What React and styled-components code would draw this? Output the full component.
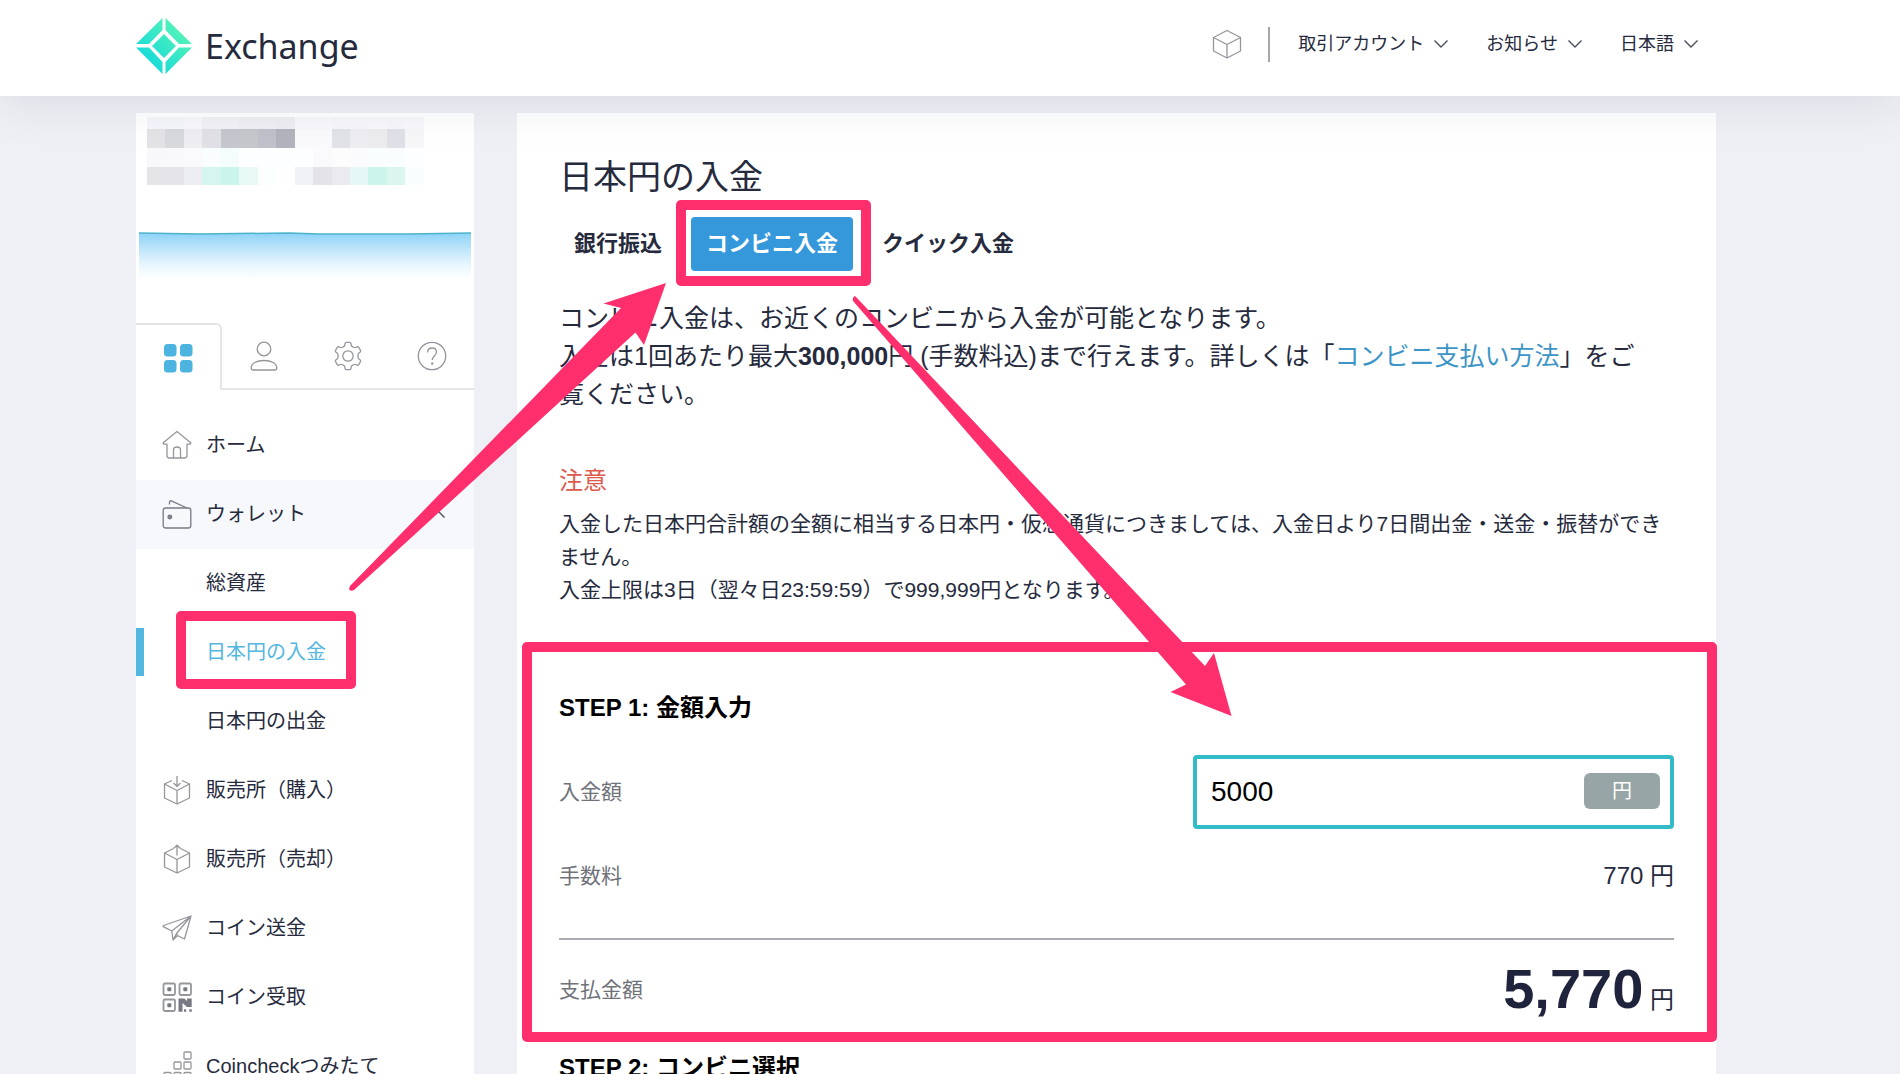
import React, { useState } from "react";
import styled, { createGlobalStyle, css } from "styled-components";

const FEE = 770;

const mosaic = [
  ["#f5f6fa", "#f5f6fa", "#f7f7fb", "#f1f1f5", "#f1f1f5", "#efeff2", "#efeff2", "#eeeef1", "#f8f8fc", "#f8f8fc", "#f6f6fa", "#f6f6fa", "#f7f7fb", "#f6f6fa", "#f8f8fc"],
  ["#e2e2e7", "#d8d9de", "#eeeef2", "#e0e0e6", "#c6c6ce", "#c6c6cd", "#c0c1cb", "#b3b3be", "#fafafc", "#fafafc", "#e2e3e8", "#eeeef2", "#ececef", "#e0e1e6", "#f7f7f9"],
  ["#f8f8fb", "#f9f9fc", "#fafafc", "#fafdfd", "#f5fdfc", "#fcfeff", "#fcfeff", "#fdfeff", "#fdfeff", "#fafafc", "#fcfcfd", "#fbfbfd", "#fafdfd", "#f9fdfd", "#fcfeff"],
  ["#e4e4e9", "#e4e4e9", "#eceef2", "#d5f5ee", "#cbf4ea", "#e9faf6", "#fbfffe", "#ffffff", "#f1f2f6", "#e3e3e9", "#ebebef", "#e6f8f5", "#cdf4ea", "#dbf5ef", "#fafdfe"],
];

// y and height of each mosaic row
const mosaicRows = [
  [0, 12],
  [12, 19],
  [31, 19],
  [50, 18],
];

const menu = [
  { label: "ホーム", icon: "home" },
  { label: "ウォレット", icon: "wallet", open: true },
  { label: "総資産" },
  { label: "日本円の入金", current: true },
  { label: "日本円の出金" },
  { label: "販売所（購入）", icon: "buy" },
  { label: "販売所（売却）", icon: "sell" },
  { label: "コイン送金", icon: "send" },
  { label: "コイン受取", icon: "qr" },
  { label: "Coincheckつみたて", icon: "stack" },
];

const tabs = [
  { icon: "grid", label: "メニュー" },
  { icon: "user", label: "アカウント" },
  { icon: "gear", label: "設定" },
  { icon: "help", label: "ヘルプ" },
];

const methods = ["銀行振込", "コンビニ入金", "クイック入金"];

const shapes = {
  cube: (
    <>
      <path d="M15 1.5 28.5 8.5V22L15 29 1.5 22V8.5Z" />
      <path d="M1.5 8.5 15 15.5 28.5 8.5M15 15.5V29" />
    </>
  ),
  grid: (
    <g fill="#4db4e2" stroke="none">
      <rect x="1" y="1" width="12.5" height="12.5" rx="3.5" />
      <rect x="17" y="1" width="12.5" height="12.5" rx="3.5" />
      <rect x="1" y="17" width="12.5" height="12.5" rx="3.5" />
      <rect x="17" y="17" width="12.5" height="12.5" rx="3.5" />
    </g>
  ),
  user: (
    <>
      <circle cx="15" cy="8" r="6.8" />
      <path d="M4.5 29C3 29 2.2 28.2 2.2 27 2.2 22.5 7.5 19.5 15 19.5S27.800 22.5 27.800 27C27.800 28.2 27 29 25.500 29Z" />
    </>
  ),
  gear: (
    <>
      <circle cx="15" cy="15" r="5.200" />
      <path d="M13.3 1.300h3.400q1 0 1.200 1l.4 2q.2.900 1 1.300l1.200.7q.8.500 1.700.2l2-.7q1-.3 1.500.6l1.800 3q.5.900-.3 1.600l-1.500 1.300q-.7.600-.7 1.500v2.400q0 .9.700 1.500l1.500 1.300q.8.700.3 1.600l-1.800 3q-.5.900-1.500.6l-2-.7q-.9-.3-1.700.2l-1.200.7q-.8.400-1 1.300l-.4 2q-.2 1-1.200 1h-3.400q-1 0-1.200-1l-.4-2q-.2-.9-1-1.300l-1.200-.7q-.8-.5-1.700-.2l-2 .7q-1 .3-1.500-.6l-1.800-3q-.5-.9.300-1.600l1.500-1.300q.7-.6.700-1.500v-2.400q0-.9-.7-1.500l-1.500-1.300q-.8-.7-.3-1.600l1.800-3q.5-.9 1.500-.6l2 .7q.9.300 1.700-.2l1.200-.7q.8-.4 1-1.300l.4-2q.2-1 1.200-1Z" />
    </>
  ),
  help: (
    <>
      <circle cx="15" cy="15" r="13.7" />
      <path d="M10.600 11.500c0-2.800 1.900-4.500 4.500-4.500s4.400 1.700 4.400 4.100c0 3.800-4.300 4-4.300 7.900" />
      <circle cx="15.200" cy="22.500" r=".6" />
    </>
  ),
  home: (
    <path d="M15 1.500 1.500 12.500c-.6.700-.2 1.700.8 1.700H5V25.500C5 27.200 5.800 28 7.500 28h15c1.700 0 2.500-.8 2.500-2.500V14.200h2.700c1 0 1.400-1 .8-1.700ZM11.500 28V20c0-4 7-4 7 0v8" />
  ),
  wallet: (
    <>
      <rect x="1.200" y="9" width="27.600" height="20" rx="2.500" />
      <path d="M7.500 5.500V3.200C7.500 2 8.300 1.500 9.300 1.900L25 9" />
      <circle cx="7.800" cy="18" r="1.800" fill="#85878f" />
    </>
  ),
  buy: (
    <>
      <path d="M10 5.500 2.500 9v14L15 29l12.500-6V9L20 5.500" />
      <path d="M2.500 9 15 15.500 27.500 9M15 15.500V29M15 1v10M11.500 8 15 11.500 18.500 8" />
    </>
  ),
  sell: (
    <>
      <path d="M11.500 4.500 2.500 9v14L15 29l12.500-6V9L18.500 4.500" />
      <path d="M2.500 9 15 15.500 27.500 9M15 15.500V29M15 11.500V1.500M11.500 4.500 15 1.300 18.500 4.500" />
    </>
  ),
  send: (
    <path d="M29 3 1.500 12.500c-.6.400-.5 1 .1 1.300L9.800 18 11 27l4.500-4.500L22.500 26 29 3ZM9.800 18 29 3 14.500 20.500 11 27M14.500 20.500l1 2" />
  ),
  qr: (
    <>
      <g strokeWidth="1.800">
        <rect x="1.500" y="1.500" width="11.500" height="11.500" rx="1.500" />
        <rect x="17.500" y="1.500" width="11.500" height="11.500" rx="1.500" />
        <rect x="1.500" y="17.500" width="11.500" height="11.500" rx="1.500" />
      </g>
      <g fill="#777985" stroke="none">
        <rect x="5.300" y="5.300" width="4" height="4" rx="1" />
        <rect x="21.300" y="5.300" width="4" height="4" rx="1" />
        <rect x="5.300" y="21.300" width="4" height="4" rx="1" />
        <path d="M16.500 16.500h6l2.500 2.500V16.500h4.700V25h-4.700l-4.500-4v8.800h-4Z" />
        <path d="M22 27.300h2.200v2.400H22ZM27.300 27.300h2.400v2.400h-2.400Z" />
      </g>
    </>
  ),
  stack: (
    <>
      <rect x="22" y="1" width="7" height="7" rx="1" />
      <rect x="12" y="11" width="7" height="7" rx="1" />
      <rect x="22" y="11" width="7" height="7" rx="1" />
      <rect x="2" y="21.500" width="7" height="7" rx="1" />
      <rect x="12" y="21.500" width="7" height="7" rx="1" />
      <rect x="22" y="21.500" width="7" height="7" rx="1" />
    </>
  ),
};

function Icon({ name, dark }) {
  return (
    <IconSvg viewBox="0 0 30 30" $dark={dark} aria-hidden="true">
      {shapes[name]}
    </IconSvg>
  );
}

function Chevron({ up }) {
  return (
    <ChevronSvg viewBox="0 0 14 8" aria-hidden="true">
      <path d={up ? "M.5 7.500 7 1l6.500 6.500" : "M.5.5 7 7 13.500.5"} />
    </ChevronSvg>
  );
}

function Header() {
  return (
    <Bar>
      <Brand href="#">
        <Logo viewBox="0 0 58 58" aria-hidden="true">
          <defs>
            <linearGradient id="mint" x1="0" y1="1" x2="1" y2="0">
              <stop offset="0.15" stopColor="#12d8dc" />
              <stop offset="0.85" stopColor="#58f5b4" />
            </linearGradient>
          </defs>
          <path
            fill="url(#mint)"
            d="M27.500 1V13L14 27H1ZM30.500 1V13L44 27H57ZM1 30.500H14L27.500 45V57ZM57 30.500H44L30.500 45V57ZM29 17 41 29 29 41 17 29Z"
          />
        </Logo>
        Exchange
      </Brand>
      <Nav>
        <Icon name="cube" />
        <Divider />
        <NavButton type="button">
          取引アカウント
          <Chevron />
        </NavButton>
        <NavButton type="button">
          お知らせ
          <Chevron />
        </NavButton>
        <NavButton type="button">
          日本語
          <Chevron />
        </NavButton>
      </Nav>
    </Bar>
  );
}

function Sidebar() {
  return (
    <Side>
      <Account>
        <Mosaic viewBox="0 0 277 86" aria-hidden="true" shapeRendering="crispEdges">
          {mosaicRows.map(([y, h], r) =>
            mosaic[r].map((fill, c) => (
              <rect key={`${r}-${c}`} x={c * 18.45} y={y} width="18.5" height={h} fill={fill} />
            ))
          )}
        </Mosaic>
        <Trend viewBox="0 0 332 48" preserveAspectRatio="none" aria-hidden="true">
          <defs>
            <linearGradient id="sky" x1="0" y1="0" x2="0" y2="1">
              <stop offset="0" stopColor="#8dd3f7" />
              <stop offset="0.35" stopColor="#bfe5fa" />
              <stop offset="0.7" stopColor="#ebf7fe" />
              <stop offset="1" stopColor="#fff" />
            </linearGradient>
          </defs>
          <path fill="url(#sky)" d="M0 1 60 2 150 1 180 2H270L332 1V48H0Z" />
          <path fill="none" stroke="#4bb3cb" strokeWidth="1.5" d="M0 1 60 2 150 1 180 2H270L332 1" />
        </Trend>
      </Account>
      <IconTabs>
        {tabs.map((tab, i) => (
          <IconTab key={tab.icon} type="button" aria-label={tab.label} $active={i === 0}>
            <Icon name={tab.icon} />
          </IconTab>
        ))}
      </IconTabs>
      <Menu>
        {menu.map((item) => (
          <MenuItem key={item.label} href="#" $open={item.open} $current={item.current}>
            <IconSlot>{item.icon && <Icon name={item.icon} dark={item.open} />}</IconSlot>
            <span>{item.label}</span>
            {item.open && <Chevron up />}
            {item.current && <MenuMark />}
          </MenuItem>
        ))}
      </Menu>
    </Side>
  );
}

function Deposit() {
  const [method, setMethod] = useState("コンビニ入金");
  const [amount, setAmount] = useState("5000");
  const total = (Number(amount) || 0) + FEE;

  return (
    <Panel>
      <Title>日本円の入金</Title>
      <Methods>
        {methods.map((name) => (
          <Method key={name} type="button" $active={name === method} onClick={() => setMethod(name)}>
            {name}
            {name === "コンビニ入金" && <MethodMark />}
          </Method>
        ))}
      </Methods>
      <Lead>
        コンビニ入金は、お近くのコンビニから入金が可能となります。
        <br />
        入金は1回あたり最大<strong>300,000</strong>円 (手数料込)まで行えます。詳しくは「
        <a href="#">コンビニ支払い方法</a>」をご
        <br />
        覧ください。
      </Lead>
      <NoteTitle>注意</NoteTitle>
      <Note>
        入金した日本円合計額の全額に相当する日本円・仮想通貨につきましては、入金日より7日間出金・送金・振替ができません。
        <br />
        入金上限は3日（翌々日23:59:59）で999,999円となります。
      </Note>
      <Step>
        <StepMark />
        <StepTitle>STEP 1: 金額入力</StepTitle>
        <AmountRow>
          <Label htmlFor="amount">入金額</Label>
          <Field>
            <input id="amount" value={amount} onChange={(e) => setAmount(e.target.value)} />
            <Unit>円</Unit>
          </Field>
        </AmountRow>
        <FeeRow>
          <Label as="span">手数料</Label>
          <Value>{FEE} 円</Value>
        </FeeRow>
        <TotalRow>
          <Label htmlFor="total">支払金額</Label>
          <Value>
            <Total id="total">{total.toLocaleString("en-US")}</Total> 円
          </Value>
        </TotalRow>
      </Step>
      <NextTitle>STEP 2: コンビニ選択</NextTitle>
    </Panel>
  );
}

function App() {
  return (
    <Page>
      <GlobalStyle />
      <Header />
      <Body>
        <Sidebar />
        <Deposit />
      </Body>
      <Arrows viewBox="0 0 1900 1074" aria-hidden="true">
        <path d="M350 586 621 308 603.500 303.500 666 283 644 345 635.500 332.500 354 590Q350 592 349 589Z" />
        <path d="M857 298 1205 666 1214 653 1231.500 716 1170.500 692 1186 684.500 853 301Q852 297 855 296Z" />
      </Arrows>
    </Page>
  );
}

export default App;

const GlobalStyle = createGlobalStyle`
  *, *::before, *::after {
    box-sizing: border-box;
  }

  body {
    margin: 0;
    background: #eff0f5;
    color: #262a3d;
    font-family: "Liberation Sans", "Noto Sans CJK JP", sans-serif;
  }

  button, input {
    font-family: inherit;
    color: inherit;
  }

  a {
    text-decoration: none;
  }
`;

const Page = styled.div`
  position: relative;
  height: 100vh;
  overflow: hidden;
`;

const Bar = styled.header`
  position: relative;
  z-index: 2;
  display: flex;
  align-items: center;
  justify-content: space-between;
  height: 96px;
  padding: 0 202px 4px 135px;
  background: #fff;
  box-shadow: 0 6px 50px rgb(30 35 70 / 10%);
`;

const Brand = styled.a`
  display: flex;
  align-items: center;
  gap: 12px;
  color: #262a3d;
  font: 34px/48px "Noto Sans", sans-serif;
`;

const Logo = styled.svg`
  width: 58px;
  height: 58px;
`;

const Nav = styled.nav`
  display: flex;
  align-items: center;
  gap: 38px;
  padding-bottom: 4px;
`;

const Divider = styled.span`
  width: 2px;
  height: 35px;
  margin: 0 -10px 0 -12px;
  background: #a5a6aa;
`;

const NavButton = styled.button`
  display: flex;
  align-items: center;
  gap: 10px;
  padding: 0;
  border: none;
  background: none;
  font-size: 18px;
  line-height: 24px;
  cursor: pointer;
`;

const IconSvg = styled.svg`
  display: block;
  width: 30px;
  height: 30px;
  fill: none;
  stroke: ${(p) => (p.$dark ? "#777985" : "#94969c")};
  stroke-width: 1.3;
  stroke-linejoin: round;
`;

const ChevronSvg = styled.svg`
  width: 14px;
  height: 8px;
  fill: none;
  stroke: #4b4e5c;
  stroke-width: 1.4;
`;

const Body = styled.div`
  display: flex;
  align-items: flex-start;
  gap: 43px;
  padding: 17px 184px 0 136px;
`;

const Side = styled.aside`
  flex: 0 0 338px;
  background: #fff;
`;

const Account = styled.div`
  display: flex;
  flex-direction: column;
  gap: 29px;
  padding: 4px 3px 43px;
`;

const Mosaic = styled.svg`
  width: 277px;
  height: 86px;
  margin-left: 8px;
`;

const Trend = styled.svg`
  width: 100%;
  height: 48px;
`;

const IconTabs = styled.div`
  display: flex;
`;

const IconTab = styled.button`
  display: flex;
  flex: 1;
  align-items: center;
  justify-content: center;
  height: 67px;
  padding: 0;
  background: none;
  border: 0 solid #e4e6ea;
  cursor: pointer;

  ${(p) =>
    p.$active
      ? css`
          border-width: 2px 2px 0 0;
          border-radius: 0 6px 0 0;
        `
      : css`
          border-bottom-width: 2px;
        `}
`;

const Menu = styled.nav`
  display: flex;
  flex-direction: column;
  padding-top: 21px;
`;

const MenuItem = styled.a`
  position: relative;
  display: flex;
  align-items: center;
  gap: 14px;
  height: 69px;
  padding: 0 29px 2px 26px;
  color: ${(p) => (p.$current ? "#54b7df" : "#262a3d")};
  background: ${(p) => (p.$open ? "#f6f8fb" : "none")};
  font-size: 20px;
  line-height: 28px;

  > ${ChevronSvg} {
    margin-left: auto;
  }

  ${(p) =>
    p.$current &&
    css`
      &::before {
        content: "";
        position: absolute;
        left: 0;
        width: 8px;
        height: 48px;
        background: #54b7df;
      }
    `}
`;

const IconSlot = styled.span`
  width: 30px;
`;

const Mark = styled.span`
  position: absolute;
  border: 10px solid #ff2f6d;
  border-radius: 5px;
  pointer-events: none;
`;

const MenuMark = styled(Mark)`
  inset: -7px 118px -2px 40px;
`;

const Panel = styled.main`
  flex: 1;
  padding: 44px 42px 40px;
  background: #fff;
`;

const Title = styled.h1`
  margin: 0 0 20px;
  font-size: 34px;
  font-weight: 400;
  line-height: 40px;
`;

const Methods = styled.div`
  display: flex;
  gap: 14px;
`;

const Method = styled.button`
  position: relative;
  height: 54px;
  padding: 0 15px 6px;
  border: none;
  border-radius: 4px;
  background: ${(p) => (p.$active ? "#3498db" : "none")};
  color: ${(p) => (p.$active ? "#fff" : "#262a3d")};
  font-size: 22px;
  font-weight: 700;
  cursor: pointer;
`;

const MethodMark = styled(Mark)`
  inset: -17px -18px -15px -15px;
`;

const Lead = styled.p`
  margin: 28px 0 50px;
  font-size: 25px;
  line-height: 38px;

  a {
    color: #3d94c6;
  }
`;

const NoteTitle = styled.h2`
  margin: 0 0 8px;
  color: #dc5a4c;
  font-size: 24px;
  font-weight: 400;
  line-height: 36px;
`;

const Note = styled.p`
  margin: 0;
  font-size: 21px;
  line-height: 33px;
`;

const Step = styled.section`
  position: relative;
  margin-top: 36px;
  padding-top: 48px;
`;

const StepMark = styled(Mark)`
  inset: 0 -43px 0 -37px;
`;

const StepTitle = styled.h2`
  margin: 0;
  color: #000;
  font-size: 24px;
  font-weight: 700;
  line-height: 36px;
`;

const NextTitle = styled(StepTitle)`
  margin-top: 8px;
`;

const Row = styled.div`
  display: flex;
  align-items: center;
  justify-content: space-between;
`;

const AmountRow = styled(Row)`
  margin: 29px 0;
`;

const FeeRow = styled(Row)`
  height: 36px;
`;

const TotalRow = styled(Row)`
  height: 104px;
  margin-top: 44px;
  padding-bottom: 3px;
  border-top: 2px solid #a9acb1;
`;

const Label = styled.label`
  color: #70727a;
  font-size: 21px;
  line-height: 36px;
`;

const Field = styled.div`
  position: relative;
  flex: 0 0 481px;

  input {
    width: 100%;
    height: 74px;
    padding: 0 100px 0 14px;
    border: 4px solid #34bbc8;
    border-radius: 4px;
    outline: none;
    background: #fff;
    color: #000;
    font-size: 28px;
  }
`;

const Unit = styled.span`
  position: absolute;
  top: 18px;
  right: 14px;
  width: 76px;
  border-radius: 6px;
  background: #97a5a6;
  color: #fff;
  font-size: 20px;
  line-height: 36px;
  text-align: center;
`;

const Value = styled.span`
  font-size: 24px;
  line-height: 36px;
`;

const Total = styled.output`
  color: #1f233b;
  font-size: 56px;
  font-weight: 700;
  line-height: 56px;
`;

const Arrows = styled.svg`
  position: absolute;
  top: 0;
  left: 0;
  z-index: 3;
  width: 1900px;
  height: 1074px;
  fill: #ff2f6d;
  pointer-events: none;
`;
